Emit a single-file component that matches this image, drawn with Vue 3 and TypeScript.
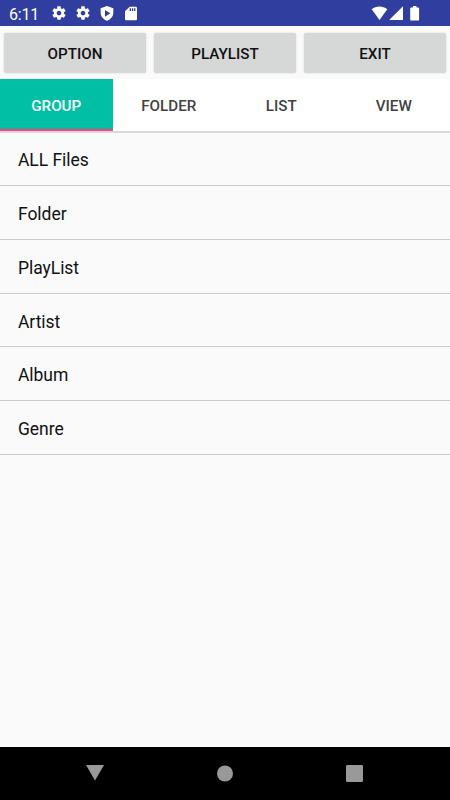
<script setup lang="ts">
import { ref } from 'vue'

const actions: string[] = ['OPTION', 'PLAYLIST', 'EXIT']
const tabs: string[] = ['GROUP', 'FOLDER', 'LIST', 'VIEW']
const entries: string[] = ['ALL Files', 'Folder', 'PlayList', 'Artist', 'Album', 'Genre']
const activeTab = ref<string>('GROUP')

const gear =
  'M19.43 12.98c.04-.32.07-.64.07-.98s-.03-.66-.07-.98l2.11-1.65c.19-.15.24-.42.12-.64l-2-3.46c-.12-.22-.39-.3-.61-.22l-2.49 1c-.52-.4-1.08-.73-1.69-.98l-.38-2.65C14.46 2.18 14.25 2 14 2h-4c-.25 0-.46.18-.49.42l-.38 2.65c-.61.25-1.17.59-1.69.98l-2.49-1c-.23-.09-.49 0-.61.22l-2 3.46c-.13.22-.07.49.12.64l2.11 1.65c-.04.32-.07.65-.07.98s.03.66.07.98l-2.11 1.65c-.19.15-.24.42-.12.64l2 3.46c.12.22.39.3.61.22l2.49-1c.52.4 1.08.73 1.69.98l.38 2.65c.03.24.24.42.49.42h4c.25 0 .46-.18.49-.42l.38-2.65c.61-.25 1.17-.59 1.69-.98l2.49 1c.23.09.49 0 .61-.22l2-3.46c.12-.22.07-.49-.12-.64l-2.11-1.65zM12 15.5c-1.93 0-3.5-1.57-3.5-3.5s1.57-3.5 3.5-3.5 3.5 1.57 3.5 3.5-1.57 3.5-3.5 3.5z'
</script>

<template>
  <div class="screen">
    <header class="status">
      <span class="clock">6:11</span>
      <div class="notices">
        <svg v-for="n in 2" :key="n" class="notice" viewBox="0 0 24 24"><path :d="gear" /></svg>
        <svg class="notice" viewBox="0 0 24 24">
          <path fill-rule="evenodd" d="M12 1.500 21.500 5V11.500c0 5.300-3.700 10-9.500 12-5.800-2-9.500-6.700-9.500-12V5zM9 7.500v10l8-5z" />
        </svg>
        <svg class="notice" viewBox="0 0 24 24">
          <path d="M19 2.500h-9L3 9.500V21c0 1.100.9 2 2 2h14c1.100 0 2-.9 2-2V4.500c0-1.100-.9-2-2-2zm-7 6.500h-2V5h2v4zm3.300 0h-2V5h2v4zm3.300 0h-2V5h2v4z" />
        </svg>
      </div>
      <svg class="system" viewBox="0 0 50 16">
        <path d="M.7 4.200C5.200.6 11.800.6 16.300 4.200L8.500 15z" />
        <path d="M32 1.200V15H18.200z" />
        <path d="M41.900 2.500H40.100a.9.900 0 0 0-.9.900V14.700a.9.900 0 0 0 .9.900H47.200a.9.900 0 0 0 .9-.9V3.400a.9.900 0 0 0-.9-.9H45.500V1.100H41.900z" />
      </svg>
    </header>

    <div class="actions">
      <button v-for="action in actions" :key="action" class="action" type="button">{{ action }}</button>
    </div>

    <nav class="tabs">
      <button
        v-for="tab in tabs"
        :key="tab"
        type="button"
        class="tab"
        :class="{ active: tab === activeTab }"
        @click="activeTab = tab"
      >{{ tab }}</button>
    </nav>

    <ul class="list">
      <li v-for="entry in entries" :key="entry" class="entry">{{ entry }}</li>
    </ul>

    <footer class="navbar">
      <svg class="key" viewBox="0 0 24 24"><path d="M3 4H21L12 19.500z" /></svg>
      <svg class="key" viewBox="0 0 24 24"><circle cx="12" cy="12.500" r="8" /></svg>
      <svg class="key" viewBox="0 0 24 24"><rect x="3" y="4" width="17" height="17" rx="1.200" /></svg>
    </footer>
  </div>
</template>

<style>
body {
  margin: 0;
}
</style>

<style scoped>
.screen {
  display: flex;
  flex-direction: column;
  width: 450px;
  height: 800px;
  overflow: hidden;
  background: #fafafa;
  color: #111;
  font-family: Roboto, sans-serif;
}

.status {
  display: flex;
  align-items: center;
  flex: none;
  box-sizing: border-box;
  height: 26px;
  padding: 0 29px 0 9px;
  background: #303f9f;
  color: #fff;
}

.clock {
  width: 41.5px;
  padding-top: 2px;
  font-size: 16px;
  line-height: 23px;
  letter-spacing: -0.2px;
}

.notices {
  display: flex;
  gap: 8.2px;
}

.notice {
  width: 16px;
  height: 16px;
  fill: #fff;
}

.system {
  width: 50px;
  height: 16px;
  margin-left: auto;
  fill: #fff;
}

.actions {
  display: grid;
  grid-template-columns: repeat(3, 1fr);
  gap: 8px;
  flex: none;
  box-sizing: border-box;
  height: 53px;
  padding: 7px 4px 6px;
}

.action,
.tab {
  border: 0;
  padding: 0;
  font-family: inherit;
  font-size: 15.2px;
  line-height: 18px;
  font-weight: 500;
}

.action {
  padding-top: 1px;
  border-radius: 2px;
  background: #d6d7d7;
  color: #111;
  box-shadow: 0 0 2px rgba(0, 0, 0, 0.16);
}

.tabs {
  display: grid;
  grid-template-columns: repeat(4, 1fr);
  flex: none;
  height: 52px;
  border-bottom: 2px solid #d9d9d9;
  background: #fff;
}

.tab {
  padding-top: 3px;
  border-bottom: 2px solid transparent;
  background: #fff;
  color: #424242;
}

.tab.active {
  border-bottom-color: #ff4081;
  background: #00bfa5;
  background-clip: padding-box;
  color: #fff;
}

.list {
  flex: 1;
  margin: 0;
  padding: 0;
  list-style: none;
}

.entry {
  box-sizing: border-box;
  height: 53.75px;
  padding: 2px 18px 0;
  border-bottom: 1px solid #cbcbcb;
  font-size: 17.5px;
  line-height: 53px;
  letter-spacing: -0.05px;
}

.entry:first-child {
  height: 53px;
  padding-top: 1px;
}

.navbar {
  display: flex;
  align-items: center;
  justify-content: space-between;
  flex: none;
  box-sizing: border-box;
  height: 53px;
  padding: 0 83px 1px;
  background: #000;
}

.key {
  width: 24px;
  height: 24px;
  fill: #999;
}
</style>
